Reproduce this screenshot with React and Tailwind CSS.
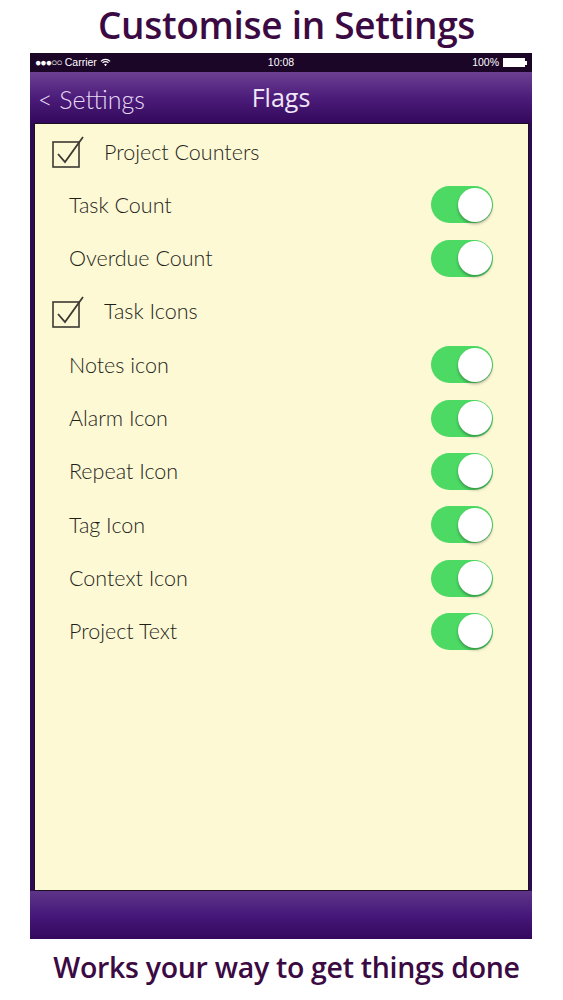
import { useState } from 'react'

const sections = [
  {
    title: 'Project Counters',
    items: ['Task Count', 'Overdue Count'],
  },
  {
    title: 'Task Icons',
    items: ['Notes icon', 'Alarm Icon', 'Repeat Icon', 'Tag Icon', 'Context Icon', 'Project Text'],
  },
]

function CheckBox() {
  return (
    <svg width="36" height="34" viewBox="0 0 36 34" className="shrink-0">
      <rect x="1" y="7" width="26" height="25" fill="none" stroke="#3a3a32" strokeWidth="1.6" />
      <path d="M6 19 L13 27 L31 2" fill="none" stroke="#3a3a32" strokeWidth="1.8" strokeLinejoin="miter" />
    </svg>
  )
}

function Toggle({ on, onClick }) {
  return (
    <button
      onClick={onClick}
      className={`relative w-[62px] h-[37px] rounded-full shrink-0 ${on ? 'bg-[#4cd964]' : 'bg-[#e5e5e0]'}`}
    >
      <span
        className={`absolute top-[1.5px] w-[34px] h-[34px] rounded-full bg-white shadow-[0_2px_3px_rgba(0,0,0,0.3)] ${
          on ? 'right-[1.5px]' : 'left-[1.5px]'
        }`}
      />
    </button>
  )
}

function StatusBar() {
  return (
    <div className="relative h-[19px] bg-[#1c0628] flex items-center justify-between px-[5px] text-white text-[10.5px] font-['Liberation_Sans',sans-serif]">
      <div className="flex items-center gap-[3px]">
        <span className="tracking-[-1px]">●●●○○</span>
        <span>Carrier</span>
        <svg width="11" height="9" viewBox="0 0 12 9">
          <path d="M1 3.2a7 7 0 0 1 10 0" fill="none" stroke="white" strokeWidth="1.3" />
          <path d="M2.8 5a4.4 4.4 0 0 1 6.4 0" fill="none" stroke="white" strokeWidth="1.3" />
          <path d="M6 8.6 L4.5 6.8a2 2 0 0 1 3 0z" fill="white" />
        </svg>
      </div>
      <span className="absolute left-1/2 -translate-x-1/2">10:08</span>
      <div className="flex items-center gap-[4px]">
        <span>100%</span>
        <div className="flex items-center">
          <div className="w-[22px] h-[9px] border border-white bg-white" />
          <div className="w-[2px] h-[4px] bg-white" />
        </div>
      </div>
    </div>
  )
}

export default function App() {
  const [state, setState] = useState({})
  const toggle = (k) => setState((s) => ({ ...s, [k]: s[k] === false ? true : false }))

  return (
    <div className="w-[563px] h-[1000px] bg-white flex flex-col items-center">
      <h1 className="h-[53px] pt-[2px] translate-x-[5px] text-[37px] leading-[46px] font-semibold text-[#3b0a43] tracking-[-0.3px] font-['Open_Sans',sans-serif]">
        Customise in Settings
      </h1>

      <div className="w-[502px] ml-[-1px] flex flex-col">
        <StatusBar />

        <div className="relative h-[51px] bg-gradient-to-b from-[#6d3f92] via-[#4c1c7a] to-[#33085c] flex items-center">
          <span className="pl-[8px] pt-[5px] text-[25px] text-[#e6d9f2] font-['Lato',sans-serif] font-light">
            &lt; Settings
          </span>
          <span className="absolute left-1/2 -translate-x-1/2 pt-[1px] text-[25px] text-[#f0e6f8] font-['Open_Sans',sans-serif]">
            Flags
          </span>
        </div>

        <div className="bg-[#2e0a52] pl-[4px] pr-[3px]">
          <div className="h-[768px] bg-[#fdf9d5] border-[1.5px] border-[#1a1020] pt-[1px] font-['Lato',sans-serif] font-light text-[21.5px] text-[#1f1f1a]">
            {sections.map((sec) => (
              <div key={sec.title}>
                <div className="h-[53.3px] flex items-center pl-[17px]">
                  <CheckBox />
                  <span className="ml-[16px]">{sec.title}</span>
                </div>
                {sec.items.map((it) => (
                  <div key={it} className="h-[53.3px] flex items-center justify-between pl-[34px] pr-[35px]">
                    <span>{it}</span>
                    <Toggle on={state[it] !== false} onClick={() => toggle(it)} />
                  </div>
                ))}
              </div>
            ))}
          </div>
        </div>

        <div className="h-[48px] bg-gradient-to-b from-[#5e3488] via-[#46187a] to-[#33085c]" />
      </div>

      <p className="mt-[10px] translate-x-[5px] text-[28.5px] leading-[36px] font-semibold text-[#3b0a43] tracking-[-0.3px] font-['Open_Sans',sans-serif]">
        Works your way to get things done
      </p>
    </div>
  )
}
